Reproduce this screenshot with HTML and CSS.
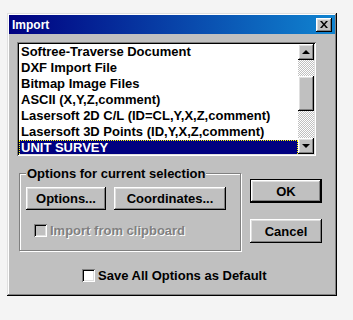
FILE: index.html
```html
<!DOCTYPE html>
<html lang="en">
<head>
    <meta charset="UTF-8">
    <meta name="viewport" content="width=device-width, initial-scale=1.0">
    <title>Import</title>
    <link rel="stylesheet" href="styles.css">
</head>
<body>
    <div class="dialog">
        <div class="titlebar">
            <span class="title">Import</span>
            <button class="close">
                <svg width="8" height="7" viewBox="0 0 8 7"><path d="M0 0h2l2 2.5L6 0h2L5 3.5 8 7H6L4 4.5 2 7H0l3-3.5z" fill="#000"/></svg>
            </button>
        </div>
        <div class="content">
            <div class="listbox">
                <ul class="items">
                    <li>Softree-Traverse Document</li>
                    <li>DXF Import File</li>
                    <li>Bitmap Image Files</li>
                    <li>ASCII (X,Y,Z,comment)</li>
                    <li>Lasersoft 2D C/L (ID=CL,Y,X,Z,comment)</li>
                    <li>Lasersoft 3D Points (ID,Y,X,Z,comment)</li>
                    <li class="selected">UNIT SURVEY</li>
                </ul>
                <div class="scrollbar">
                    <div class="arrow"><span class="tri up"></span></div>
                    <div class="track"><div class="thumb"></div></div>
                    <div class="arrow"><span class="tri down"></span></div>
                </div>
            </div>
            <div class="middle">
                <fieldset class="group">
                    <legend>Options for current selection</legend>
                    <div class="group-buttons">
                        <button class="btn options">Options...</button>
                        <button class="btn coords">Coordinates...</button>
                    </div>
                    <label class="check disabled"><span class="box"></span>Import from clipboard</label>
                </fieldset>
                <div class="side-buttons">
                    <button class="btn side default">OK</button>
                    <button class="btn side">Cancel</button>
                </div>
            </div>
            <label class="check save"><span class="box"></span>Save All Options as Default</label>
        </div>
    </div>
</body>
</html>
```

FILE: styles.css
```css
body {
    margin: 0;
    background: #f4f4f4;
    font: bold 13px "Liberation Sans", Arial, sans-serif;
    color: #000;
}
.dialog {
    width: 330px;
    height: 283px;
    margin: 13px 0 0 7px;
    padding: 2px;
    box-sizing: border-box;
    background: #c0c0c0;
    box-shadow: inset -1px -1px #000, inset 1px 1px #dfdfdf, inset -2px -2px #808080, inset 2px 2px #fff;
}
.titlebar {
    height: 19px;
    display: flex;
    align-items: center;
    justify-content: space-between;
    padding: 0 3px;
    background: linear-gradient(90deg, #000080, #1084d0);
    color: #fff;
}
.title {
    font-size: 12px;
}
.close {
    width: 16px;
    height: 14px;
    padding: 0;
    border: none;
    background: #c0c0c0;
    display: flex;
    align-items: center;
    justify-content: center;
    box-shadow: inset -1px -1px #000, inset 1px 1px #fff, inset -2px -2px #808080, inset 2px 2px #dfdfdf;
}
.content {
    padding: 8px 0 0 8px;
}
.listbox {
    width: 299px;
    height: 114px;
    box-sizing: border-box;
    padding: 2px;
    display: flex;
    background: #fff;
    box-shadow: inset 1px 1px #808080, inset -1px -1px #fff, inset 2px 2px #000, inset -2px -2px #dfdfdf;
}
.items {
    list-style: none;
    margin: 0;
    padding: 0;
    flex: 1;
    overflow: hidden;
}
.items li {
    height: 16px;
    line-height: 15px;
    padding-left: 2px;
    white-space: nowrap;
}
.items li.selected {
    background: #000080;
    color: #fff;
    outline: 1px dotted #ff0;
    outline-offset: -1px;
}
.scrollbar {
    width: 16px;
    display: flex;
    flex-direction: column;
}
.arrow, .thumb, .btn {
    background: #c0c0c0;
    box-shadow: inset -1px -1px #000, inset 1px 1px #fff, inset -2px -2px #808080, inset 2px 2px #dfdfdf;
}
.arrow {
    height: 16px;
    display: flex;
    align-items: center;
    justify-content: center;
}
.tri {
    width: 0;
    height: 0;
    border-left: 4px solid transparent;
    border-right: 4px solid transparent;
}
.tri.up {
    border-bottom: 4px solid #000;
}
.tri.down {
    border-top: 4px solid #000;
}
.track {
    flex: 1;
    background: repeating-conic-gradient(#c0c0c0 0 25%, #fff 0 50%) 0 0 / 2px 2px;
}
.thumb {
    margin-top: 16px;
    height: 35px;
}
.middle {
    display: flex;
    margin-top: 10px;
}
.group {
    width: 222px;
    box-sizing: border-box;
    margin: 0 0 0 2px;
    padding: 6px 6px 12px;
    border: 1px solid #808080;
    box-shadow: 1px 1px #fff, inset 1px 1px #fff;
}
.group legend {
    padding: 0 1px;
    line-height: 15px;
    background: #c0c0c0;
}
.group-buttons {
    display: flex;
    gap: 8px;
}
.btn {
    border: none;
    padding: 0;
    font: inherit;
    color: #000;
    height: 23px;
}
.options {
    width: 80px;
}
.coords {
    width: 112px;
}
.check {
    display: flex;
    align-items: center;
    gap: 3px;
    line-height: 15px;
}
.box {
    width: 13px;
    height: 13px;
    box-sizing: border-box;
    background: #fff;
    box-shadow: inset 1px 1px #808080, inset -1px -1px #fff, inset 2px 2px #000, inset -2px -2px #dfdfdf;
}
.check.disabled {
    margin: 13px 0 0 8px;
    color: #808080;
    text-shadow: 1px 1px #fff;
}
.check.disabled .box {
    background: #c0c0c0;
}
.side-buttons {
    display: flex;
    flex-direction: column;
    gap: 16px;
    margin: 13px 0 0 9px;
}
.side {
    width: 72px;
    height: 24px;
}
.side.default {
    box-shadow: inset 0 0 0 1px #000, inset -2px -2px #000, inset 2px 2px #fff, inset -3px -3px #808080, inset 3px 3px #dfdfdf;
}
.check.save {
    margin: 17px 0 0 65px;
}
```
